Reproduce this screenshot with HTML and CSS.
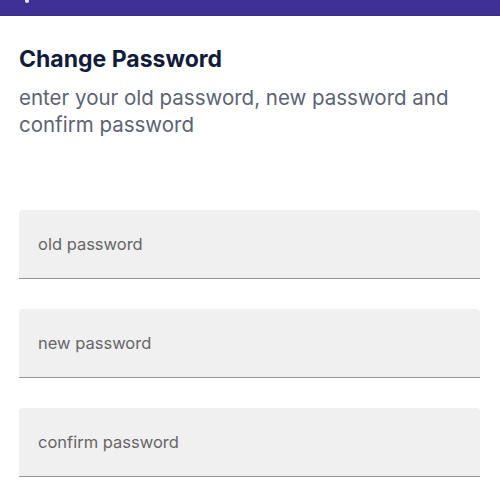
FILE: index.html
```html
<!DOCTYPE html>
<html>
<head>
<meta charset="utf-8">
<link rel="stylesheet" href="styles.css">
</head>
<body>
<header class="appbar"><span class="dot"></span></header>
<main class="content">
  <h1 class="title">Change Password</h1>
  <p class="subtitle">enter your old password, new password and confirm password</p>
  <div class="fields">
    <div class="field"><span class="placeholder">old password</span></div>
    <div class="field"><span class="placeholder">new password</span></div>
    <div class="field"><span class="placeholder">confirm password</span></div>
  </div>
</main>
</body>
</html>
```
FILE: styles.css
```css
html, body {
  margin: 0;
  padding: 0;
  background: #ffffff;
  font-family: Inter, "Noto Sans", sans-serif;
}
.appbar {
  height: 15px;
  background: #3f3096;
  border-bottom: 1px solid #3a2c88;
  position: relative;
}
.dot {
  position: absolute;
  left: 25px;
  top: 0;
  width: 4px;
  height: 3px;
  background: #e8e4ff;
  border-radius: 0 0 2px 2px;
}
.content {
  padding: 28px 20px 0 19px;
}
.title {
  margin: 0;
  font-size: 23px;
  font-weight: 700;
  color: #111c3d;
  line-height: 30px;
}
.subtitle {
  margin: 10px 0 0 0;
  font-size: 20.5px;
  line-height: 27px;
  color: #5b6376;
  font-weight: 400;
}
.fields {
  display: flex;
  flex-direction: column;
  gap: 30px;
  margin-top: 72px;
}
.field {
  height: 69px;
  background: #f0f0f0;
  border-bottom: 1px solid #949494;
  border-radius: 4px 4px 0 0;
  display: flex;
  align-items: center;
  padding-left: 19px;
  box-sizing: border-box;
}
.placeholder {
  font-size: 16.5px;
  color: #666666;
}
```
